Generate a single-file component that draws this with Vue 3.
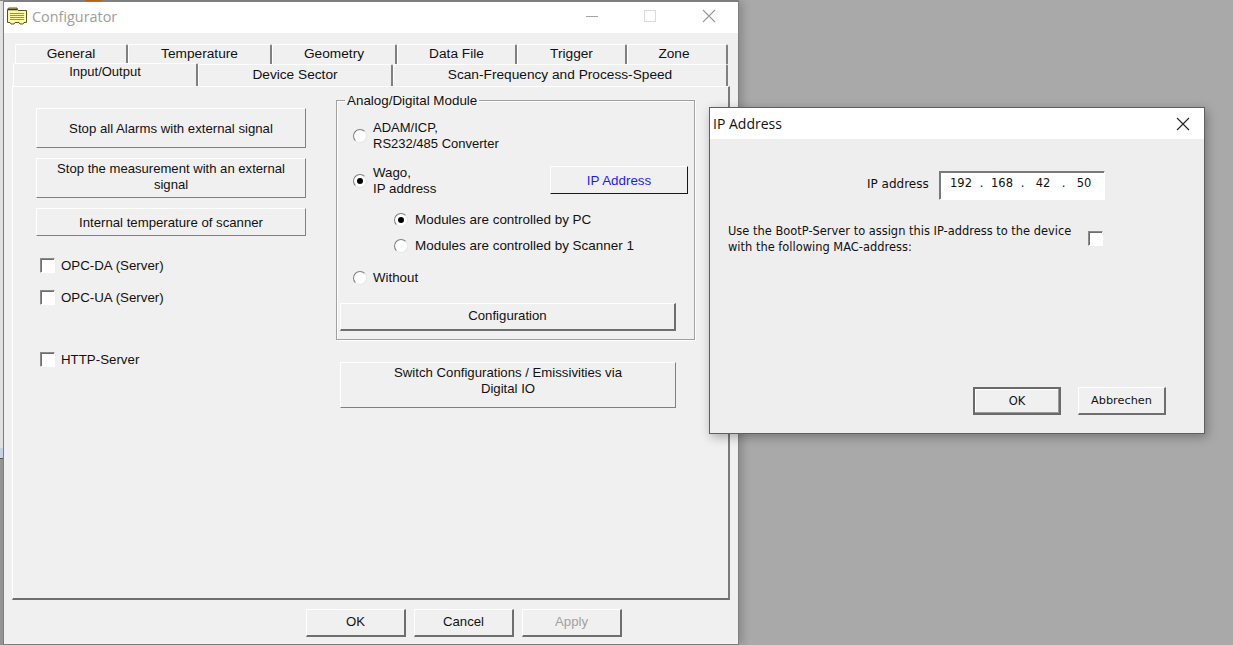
<script setup>
const row1 = [
  { t: 'General', w: 113 },
  { t: 'Temperature', w: 144 },
  { t: 'Geometry', w: 125 },
  { t: 'Data File', w: 120 },
  { t: 'Trigger', w: 110 },
  { t: 'Zone', w: 101 }
]
const row2 = [
  { t: 'Device Sector', w: 195 },
  { t: 'Scan-Frequency and Process-Speed', w: 335 }
]
</script>

<template>
  <div class="desktop">
    <div class="strip"></div>
    <div class="topscrap"></div>
    <section class="win main">
      <header class="bar mbar">
        <svg class="appicon" width="20" height="18" viewBox="0 0 20 18">
          <path d="M0.5 2.5V15.5H3L4 17H7L8 15.5H12L13 17H16L17 15.5H19.5V3.5H11L10 1H1.5Z" fill="#fdfaa6" stroke="#5e5620"/>
          <path d="M1 2.5H10" stroke="#3d3a20" stroke-width="1.6"/>
          <path d="M3 6.5H17M3 8.5H17M3 10.5H17M3 12.5H17" stroke="#9c9450"/>
        </svg>
        <span class="title">Configurator</span>
        <span class="caps">
          <svg width="14" height="14" viewBox="0 0 14 14"><path d="M0 7.5H12" stroke="#a6a6a6"/></svg>
          <svg width="14" height="14" viewBox="0 0 14 14"><rect x="0.5" y="1.5" width="11" height="11" fill="none" stroke="#dcdcdc"/></svg>
          <svg width="14" height="14" viewBox="0 0 14 14"><path d="M1 1L13 13M13 1L1 13" stroke="#9a9a9a" stroke-width="1.1"/></svg>
        </span>
      </header>

      <div class="body">
        <div class="tabs">
          <div class="tabrow r1">
            <div v-for="x in row1" :key="x.t" class="tab" :style="{ width: x.w + 'px' }">{{ x.t }}</div>
          </div>
          <div class="tabrow r2">
            <div class="tab active">Input/Output</div>
            <div v-for="x in row2" :key="x.t" class="tab" :style="{ width: x.w + 'px' }">{{ x.t }}</div>
          </div>
        </div>

        <div class="panel">
          <div class="col left">
            <button class="btn b40 one">Stop all Alarms with external signal</button>
            <button class="btn b40 two">Stop the measurement with an external<br>signal</button>
            <button class="btn b28">Internal temperature of scanner</button>
            <label class="chk first"><i class="box"></i>OPC-DA (Server)</label>
            <label class="chk second"><i class="box"></i>OPC-UA (Server)</label>
            <label class="chk third"><i class="box"></i>HTTP-Server</label>
          </div>

          <div class="col right">
            <fieldset class="group">
              <legend>Analog/Digital Module</legend>
              <div class="opt o1"><i class="radio"></i><span>ADAM/ICP,<br>RS232/485 Converter</span></div>
              <div class="opt o2">
                <i class="radio on"></i><span>Wago,<br>IP address</span>
                <button class="btn blue">IP Address</button>
              </div>
              <div class="opt sub s1"><i class="radio on"></i><span>Modules are controlled by PC</span></div>
              <div class="opt sub s2"><i class="radio"></i><span>Modules are controlled by Scanner 1</span></div>
              <div class="opt o3"><i class="radio"></i><span>Without</span></div>
              <button class="btn cfg">Configuration</button>
            </fieldset>
            <button class="btn switch">Switch Configurations / Emissivities via<br>Digital IO</button>
          </div>
        </div>

        <div class="foot">
          <button class="btn raised">OK</button>
          <button class="btn raised">Cancel</button>
          <button class="btn raised off">Apply</button>
        </div>
      </div>
    </section>

    <section class="win dialog">
      <header class="bar dbar">
        <span class="dtitle">IP Address</span>
        <svg class="dclose" width="14" height="14" viewBox="0 0 14 14"><path d="M1 1L13 13M13 1L1 13" stroke="#222" stroke-width="1.1"/></svg>
      </header>
      <div class="dbody">
        <div class="iprow">
          <span class="iplabel">IP address</span>
          <div class="ipinput">
            <span>192</span><b>.</b><span>168</span><b>.</b><span>42</span><b>.</b><span>50</span>
          </div>
        </div>
        <div class="boot">
          <p>Use the BootP-Server to assign this IP-address to the device<br>with the following MAC-address:</p>
          <i class="box"></i>
        </div>
        <div class="dfoot">
          <button class="btn dbtn def">OK</button>
          <button class="btn dbtn abbr">Abbrechen</button>
        </div>
      </div>
    </section>
  </div>
</template>

<style>
html, body { margin: 0; overflow: hidden; }
</style>

<style scoped>
.desktop {
  position: relative;
  width: 1233px;
  height: 645px;
  overflow: hidden;
  background: #a9a9a9;
  font: 13.2px "Liberation Sans", Arial, sans-serif;
  color: #111;
}
.strip {
  position: absolute; left: 0; top: 0; width: 3px; height: 645px;
  background: linear-gradient(#e4e4e4 0 448px, #c8d6e6 448px 458px, #555 458px 459px, #979797 459px);
}
.topscrap {
  position: absolute; left: 0; top: 0; width: 739px; height: 1px;
  background: linear-gradient(90deg, #8a8a8a 0 85px, #c46a1e 85px 102px, #8a8a8a 102px);
}
.win { position: absolute; box-sizing: border-box; background: #f0f0f0; }
.main {
  left: 3px; top: 1px; width: 736px; height: 644px;
  border: 1px solid #7f7f7f;
  box-shadow: 4px 0 8px rgba(0,0,0,.18);
}
.bar { box-sizing: border-box; display: flex; align-items: center; height: 31px; background: #fff; }
.mbar { padding-bottom: 4px; }
.appicon { margin-left: 3px; }
.title { margin-left: 5px; padding-top: 2px; font: 14.4px "Open Sans", sans-serif; color: #9d9d9d; }
.caps { display: flex; margin-left: auto; margin-right: 22px; gap: 44px; }
.body { position: relative; height: 611px; }
.tabs { padding: 11px 0 0 9px; font-size: 13.7px; }
.tabrow { display: flex; }
.r1 { height: 20px; padding-left: 2px; }
.r2 { height: 22px; }
.tab {
  box-sizing: border-box;
  display: flex; align-items: center; justify-content: center;
  border-top: 1px solid #fff; border-left: 1px solid #fff;
  border-right: 2px solid #808080;
  border-top-left-radius: 2px; border-top-right-radius: 2px;
}
.r1 .tab { height: 20px; padding-bottom: 3px; }
.r1 .tab:last-child { padding-right: 6px; }
.r2 .tab { height: 22px; padding-bottom: 2px; }
.r2 .tab.active {
  position: relative; z-index: 1;
  width: 185px; height: 23px; margin-top: -1px; margin-bottom: -1px;
  background: #f0f0f0; padding-bottom: 7px; font-size: 13px;
}
.panel {
  box-sizing: border-box;
  display: flex;
  margin-left: 8px; width: 718px; height: 514px;
  border-top: 1px solid #fff; border-left: 1px solid #fff;
  border-right: 2px solid #7a7a7a; border-bottom: 2px solid #6e6e6e;
}
.col { display: flex; flex-direction: column; align-items: flex-start; }
.left { width: 301px; padding: 21px 0 0 23px; box-sizing: border-box; }
.right { padding-top: 6px; }

.btn {
  box-sizing: border-box; padding: 0; margin: 0;
  font: inherit; color: inherit; text-align: center;
  background: #f0f0f0;
  border: 1px solid; border-color: #fff #808080 #808080 #fff;
  line-height: 16px;
}
.b40 { width: 270px; height: 40px; margin-bottom: 10px; }
.one { padding-top: 2px; }
.two { padding-bottom: 2px; font-size: 13.1px; }
.b28 { width: 270px; height: 28px; padding-top: 2px; }
.chk { display: flex; align-items: center; gap: 6px; padding-left: 4px; height: 16px; font-size: 13.3px; }
.box {
  display: block; box-sizing: border-box; width: 15px; height: 15px; background: #fff;
  border: 1px solid; border-color: #8a8a8a #fff #fff #8a8a8a;
  box-shadow: inset 1px 1px 0 #6e6e6e;
}
.first { margin-top: 21px; }
.second { margin-top: 16px; }
.third { margin-top: 46px; }

.group {
  box-sizing: border-box; width: 359px; height: 247px; margin: 0 0 0 22px;
  padding: 0 0 0 3px; min-width: 0;
  border: 1px solid #a0a0a0;
  box-shadow: 1px 1px 0 #fff, inset 1px 1px 0 #fff;
}
legend { padding: 0 2px; margin-left: 5px; line-height: 15px; font-size: 13.4px; }
.opt { display: flex; align-items: center; gap: 6px; padding-left: 13px; line-height: 16px; position: relative; font-size: 13.3px; }
.o1 { margin-top: 12px; height: 32px; font-size: 13px; }
.o2 { margin-top: 13px; height: 32px; }
.sub { padding-left: 54px; height: 16px; gap: 7px; font-size: 13.45px; }
.s1 { margin-top: 15px; }
.s2 { margin-top: 10px; }
.o3 { margin-top: 16px; height: 16px; }
.radio {
  display: block; box-sizing: border-box; flex: none; width: 14px; height: 14px; border-radius: 50%;
  background: #fff;
  border: 1px solid; border-color: #7e7e7e #e6e6e6 #e6e6e6 #7e7e7e;
  position: relative;
}
.radio.on::after {
  content: ""; position: absolute; left: 3px; top: 3px; width: 6px; height: 6px;
  border-radius: 50%; background: #000;
}
.blue {
  position: absolute; left: 210px; top: 1px; width: 138px; height: 28px; padding-top: 2px; font-size: 13.4px;
  color: #1a1aff; border-color: #fff #0000d8 #0000d8 #fff;
}
.cfg {
  display: block; width: 336px; height: 28px; margin-top: 17px; padding-bottom: 2px;
  border-width: 1px 2px 2px 1px; border-color: #fff #6e6e6e #6e6e6e #fff;
}
.switch { width: 336px; height: 46px; margin: 22px 0 0 26px; padding-bottom: 9px; }

.foot {
  display: flex; gap: 8px; padding: 9px 0 0 302px;
}
.raised {
  width: 100px; height: 28px; padding-bottom: 2px;
  border-width: 1px 2px 2px 1px; border-color: #fff #6e6e6e #6e6e6e #fff;
}
.off { color: #a0a0a0; }

.dialog {
  left: 709px; top: 107px; width: 496px; height: 327px;
  border: 1px solid #5f5f5f; background: #eee;
  box-shadow: 2px 3px 10px rgba(0,0,0,.3);
}
.dbar { justify-content: space-between; }
.dtitle { margin-left: 3px; font: 14px "Open Sans", sans-serif; color: #111; }
.dclose { margin-right: 14px; }
.dbody { font: 12px "DejaVu Sans", sans-serif; }
.iprow { display: flex; align-items: center; padding: 32px 0 0 157px; }
.iplabel { width: 72px; padding-bottom: 4px; }
.ipinput {
  box-sizing: border-box; display: flex; align-items: center; width: 166px; height: 29px;
  background: #fff; padding: 0 0 6px 6px; font-size: 11.5px;
  border: 1px solid; border-color: #7a7a7a #fff #fff #7a7a7a;
  box-shadow: inset 1px 1px 0 #7a7a7a;
}
.ipinput span { width: 30px; text-align: center; }
.ipinput b { width: 11px; font-weight: 400; text-align: center; }
.boot { display: flex; align-items: center; padding: 23px 0 0 18px; }
.boot p { margin: 0; width: 360px; line-height: 16px; white-space: nowrap; font-size: 11.45px; }
.boot .box { margin-bottom: 2px; }
.dfoot { display: flex; gap: 17px; padding: 132px 0 0 263px; }
.dbtn {
  width: 88px; height: 28px;
  border-width: 1px 2px 2px 1px; border-color: #fff #6e6e6e #6e6e6e #fff;
}
.abbr { font-size: 11.3px; }
.dfoot .def { border: 2px solid #6a6a6a; box-shadow: inset -1px -1px 0 #9a9a9a, inset 1px 1px 0 #fff; font-size: 11.5px; }
</style>
